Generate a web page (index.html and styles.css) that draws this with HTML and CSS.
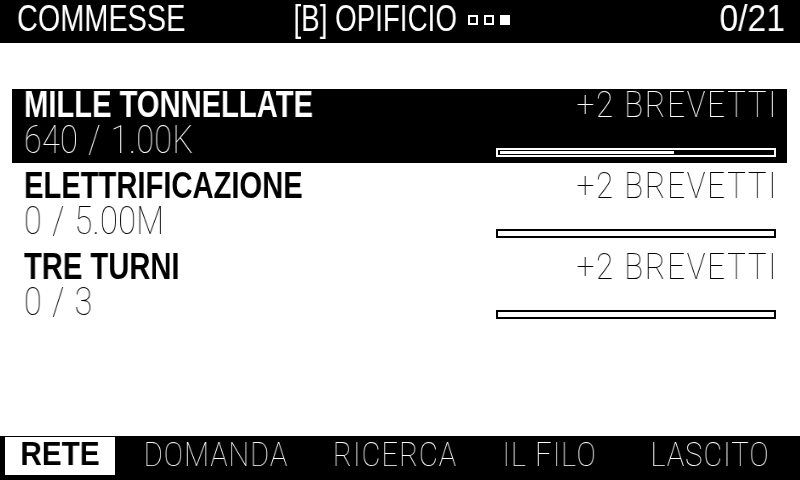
FILE: index.html
```html
<!DOCTYPE html>
<html lang="it">
<head>
<meta charset="utf-8">
<title>Commesse</title>
<link rel="stylesheet" href="styles.css">
</head>
<body>
<div class="screen">
  <header class="topbar">
    <div class="tb-left"><span class="narrow narrow-l">COMMESSE</span></div>
    <div class="tb-center">
      <span class="narrow narrow-r tb-title">[B] OPIFICIO</span>
      <span class="pages"><i class="dot"></i><i class="dot"></i><i class="dot on"></i></span>
    </div>
    <div class="tb-right"><span class="narrow narrow-r digits">0/21</span></div>
  </header>

  <main class="list">
    <div class="row selected">
      <div class="name"><span class="narrow narrow-l">MILLE TONNELLATE</span></div>
      <div class="reward"><span class="thin thin-r">+2 BREVETTI</span></div>
      <div class="value"><span class="thin thin-l">640 / 1.00K</span></div>
      <div class="bar"><div class="fill" style="width:64%"></div></div>
    </div>
    <div class="row">
      <div class="name"><span class="narrow narrow-l">ELETTRIFICAZIONE</span></div>
      <div class="reward"><span class="thin thin-r">+2 BREVETTI</span></div>
      <div class="value"><span class="thin thin-l">0 / 5.00M</span></div>
      <div class="bar"><div class="fill" style="width:0%"></div></div>
    </div>
    <div class="row">
      <div class="name"><span class="narrow narrow-l">TRE TURNI</span></div>
      <div class="reward"><span class="thin thin-r">+2 BREVETTI</span></div>
      <div class="value"><span class="thin thin-l">0 / 3</span></div>
      <div class="bar"><div class="fill" style="width:0%"></div></div>
    </div>
  </main>

  <nav class="tabs">
    <div class="tab active"><span class="narrow narrow-c">RETE</span></div>
    <div class="tab"><span class="thin thin-c">DOMANDA</span></div>
    <div class="tab"><span class="thin thin-c">RICERCA</span></div>
    <div class="tab"><span class="thin thin-c">IL FILO</span></div>
    <div class="tab"><span class="thin thin-c">LASCITO</span></div>
  </nav>
</div>
</body>
</html>
```

FILE: styles.css
```css
html, body {
  margin: 0;
  padding: 0;
  background: #fff;
}

.screen {
  width: 800px;
  height: 480px;
  overflow: hidden;
  display: flex;
  flex-direction: column;
  background: #fff;
  color: #000;
  font-family: "Liberation Sans", Arial, sans-serif;
}

/* condensed faces are not installed: narrow the glyphs horizontally */
.narrow {
  display: inline-block;
  white-space: nowrap;
  transform: scaleX(0.8);
  will-change: transform;
}
.narrow-l { transform-origin: left center; }
.narrow-r { transform-origin: right center; }
.narrow-c { transform-origin: center center; }

.thin {
  display: inline-block;
  font-family: "Roboto", "Inter", sans-serif;
  font-weight: 100;
  transform: scaleX(0.85);
  will-change: transform;
  white-space: nowrap;
}
.thin-l { transform-origin: left center; }
.thin-r { transform-origin: right center; }
.thin-c { transform-origin: center center; }

/* top bar */
.topbar {
  height: 43px;
  flex: none;
  background: #000;
  color: #fff;
  display: grid;
  grid-template-columns: 1fr auto 1fr;
  align-items: start;
  padding: 0 15px 0 17px;
  font-size: 37px;
  line-height: 37px;
}
.tb-left .narrow { transform: scaleX(0.78); }
.tb-title {
  transform: scaleX(0.75);
  margin-left: -53px;
}
.tb-center {
  display: flex;
  align-items: center;
  gap: 12px;
}
.tb-right { text-align: right; }
.tb-right .digits { transform: scaleX(0.91); }
.pages {
  display: flex;
  gap: 6px;
  margin-top: 2px;
}
.dot {
  display: block;
  width: 10px;
  height: 10px;
  box-sizing: border-box;
  border: 2px solid #fff;
}
.dot.on { background: #fff; }

/* list */
.list {
  flex: 1;
  padding: 46px 13px 0 12px;
  display: flex;
  flex-direction: column;
  gap: 7px;
}
.row {
  height: 74px;
  box-sizing: border-box;
  padding: 0 11px 6px 12px;
  display: grid;
  grid-template-columns: 1fr auto;
  grid-template-rows: 31px 37px;
}
.row.selected {
  background: #000;
  color: #fff;
}
.name {
  font-weight: 700;
  font-size: 36px;
  line-height: 31px;
  white-space: nowrap;
}
.name .narrow { transform: scaleX(0.81); }
.reward {
  text-align: right;
  font-size: 37px;
  line-height: 31px;
  letter-spacing: 2px;
  margin-right: -2px;
}
.value {
  font-size: 38px;
  line-height: 40px;
  letter-spacing: 0.5px;
  word-spacing: 2px;
}
.bar {
  align-self: end;
  justify-self: end;
  width: 280px;
  height: 9px;
  box-sizing: border-box;
  border: 2px solid #000;
  background: #fff;
  padding: 1px 2px;
}
.bar .fill {
  height: 100%;
  background: #000;
}
.row.selected .bar {
  border-color: #fff;
  background: #000;
}
.row.selected .bar .fill {
  background: #fff;
}

/* bottom tabs */
.tabs {
  height: 44px;
  flex: none;
  background: #000;
  color: #fff;
  display: grid;
  grid-template-columns: 110px 203px 155px 154px 166px;
  padding-left: 5px;
  align-items: start;
}
.tab {
  margin-top: 1px;
  height: 38px;
  text-align: center;
  font-size: 34px;
  line-height: 34px;
  letter-spacing: 1.3px;
  white-space: nowrap;
}
.tab.active {
  background: #fff;
  color: #000;
  font-weight: 700;
  font-size: 33px;
  letter-spacing: 0;
}
.tab.active .narrow { transform: scaleX(0.9); }
```
